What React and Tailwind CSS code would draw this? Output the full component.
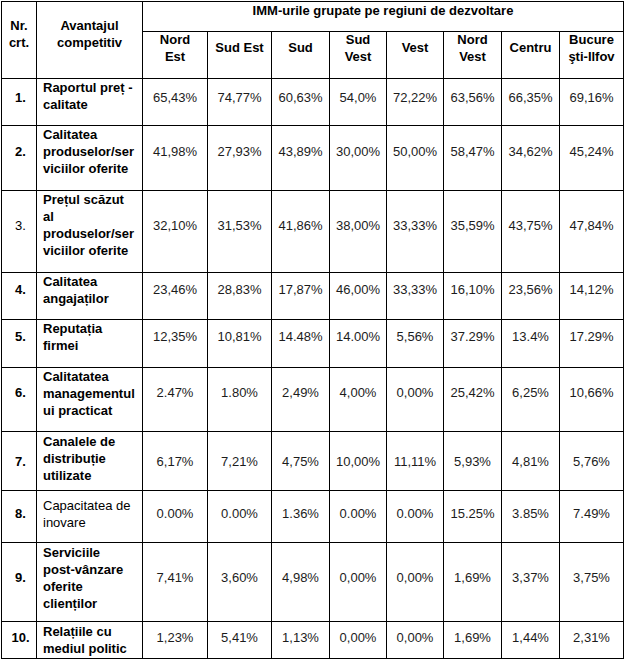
import React from "react";

const rows = [
  { n: "1.", nb: true, t: ["Raportul preț -", "calitate"], tb: true, v: ["65,43%", "74,77%", "60,63%", "54,0%", "72,22%", "63,56%", "66,35%", "69,16%"], pb: "pb-[10px]", tpb: "pb-[12px]" },
  { n: "2.", nb: true, t: ["Calitatea", "produselor/ser", "viciilor oferite"], tb: true, v: ["41,98%", "27,93%", "43,89%", "30,00%", "50,00%", "58,47%", "34,62%", "45,24%"], pb: "pb-[14px]", tpb: "pb-[14px]" },
  { n: "3.", nb: false, t: ["Prețul scăzut", "al", "produselor/ser", "viciilor oferite"], tb: true, v: ["32,10%", "31,53%", "41,86%", "38,00%", "33,33%", "35,59%", "43,75%", "47,84%"], pb: "pb-[13px]", tpb: "pb-[14px]" },
  { n: "4.", nb: true, t: ["Calitatea", "angajaților"], tb: true, v: ["23,46%", "28,83%", "17,87%", "46,00%", "33,33%", "16,10%", "23,56%", "14,12%"], pb: "pb-[13px]", tpb: "pb-[13px]" },
  { n: "5.", nb: true, t: ["Reputația", "firmei"], tb: true, v: ["12,35%", "10,81%", "14.48%", "14.00%", "5,56%", "37.29%", "13.4%", "17.29%"], pb: "pb-[14px]", tpb: "pb-[14px]" },
  { n: "6.", nb: true, t: ["Calitatatea", "managementul", "ui practicat"], tb: true, v: ["2.47%", "1.80%", "2,49%", "4,00%", "0,00%", "25,42%", "6,25%", "10,66%"], pb: "pb-[14px]", tpb: "pb-[13px]" },
  { n: "7.", nb: true, t: ["Canalele de", "distribuție", "utilizate"], tb: true, v: ["6,17%", "7,21%", "4,75%", "10,00%", "11,11%", "5,93%", "4,81%", "5,76%"], pb: "pb-0", tpb: "pb-[5px]" },
  { n: "8.", nb: true, t: ["Capacitatea de", "inovare"], tb: false, v: ["0.00%", "0.00%", "1.36%", "0.00%", "0.00%", "15.25%", "3.85%", "7.49%"], pb: "pb-[6px]", tpb: "pb-[6px]" },
  { n: "9.", nb: true, t: ["Serviciile", "post-vânzare", "oferite", "clienților"], tb: true, v: ["7,41%", "3,60%", "4,98%", "0,00%", "0,00%", "1,69%", "3,37%", "3,75%"], pb: "pb-[9px]", tpb: "pb-[9px]" },
  { n: "10.", nb: true, t: ["Relațiile cu", "mediul politic"], tb: true, v: ["1,23%", "5,41%", "1,13%", "0,00%", "0,00%", "1,69%", "1,44%", "2,31%"], pb: "pb-[5px]", tpb: "pb-0" },
];

const regions = [
  ["Nord", "Est"],
  ["Sud Est"],
  ["Sud"],
  ["Sud", "Vest"],
  ["Vest"],
  ["Nord", "Vest"],
  ["Centru"],
  ["Bucure", "şti-Ilfov"],
];

const cell = "border-r border-b border-black flex items-center";

function Lines({ lines }) {
  return (
    <div>
      {lines.map((l, i) => (
        <div key={i} className="whitespace-nowrap">
          {l}
        </div>
      ))}
    </div>
  );
}

export default function App() {
  return (
    <div className="bg-white min-h-[662px] w-[626px] pt-px pl-px text-black [font-family:'Liberation_Sans',Arial,sans-serif] text-[13px] leading-[17px]">
      <div className="grid w-fit border-l border-t border-black grid-cols-[35px_106px_65px_64px_58px_57px_57px_58px_58px_64px] grid-rows-[30px_47px_47px_65px_82px_47px_48px_64px_59px_52px_79px_37px]">
        <div className={`${cell} row-span-2 justify-center text-center font-bold pb-[13px]`}>
          <Lines lines={["Nr.", "crt."]} />
        </div>
        <div className={`${cell} row-span-2 justify-center text-center font-bold pb-[13px]`}>
          <Lines lines={["Avantajul", "competitiv"]} />
        </div>
        <div className={`${cell} col-span-8 justify-center font-bold pb-[12px]`}>
          IMM-urile grupate pe regiuni de dezvoltare
        </div>
        {regions.map((r, i) => (
          <div key={i} className={`${cell} justify-center text-center font-bold pb-[15px]`}>
            <Lines lines={r} />
          </div>
        ))}
        {rows.map((row, ri) => (
          <React.Fragment key={ri}>
            <div className={`${cell} justify-center pl-[3px] ${row.nb ? "font-bold" : ""} ${row.pb}`}>
              {row.n}
            </div>
            <div className={`${cell} justify-start pl-[6px] ${row.tb ? "font-bold" : ""} ${row.tpb}`}>
              <Lines lines={row.t} />
            </div>
            {row.v.map((v, vi) => (
              <div key={vi} className={`${cell} justify-center text-[#1c1c1c] ${row.pb}`}>
                {v}
              </div>
            ))}
          </React.Fragment>
        ))}
      </div>
    </div>
  );
}
